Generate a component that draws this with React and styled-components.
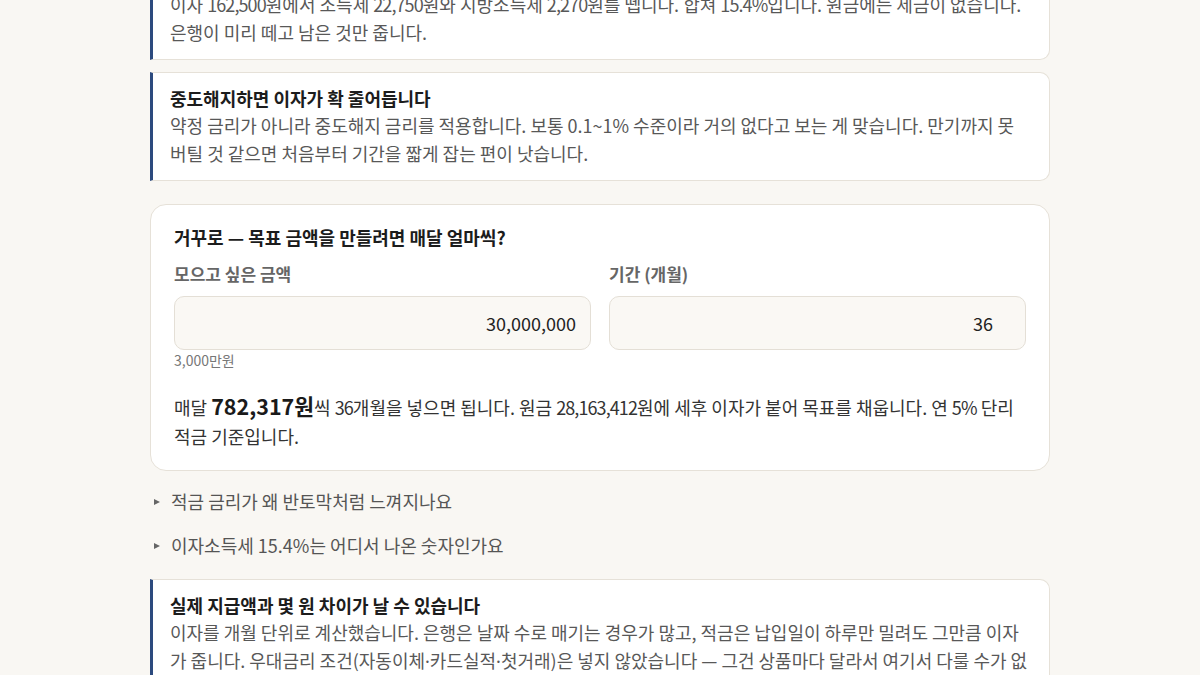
import React from 'react';
import styled, { createGlobalStyle } from 'styled-components';

const GlobalStyle = createGlobalStyle`
	html, body {
		margin: 0;
		padding: 0;
		background: #f9f7f3;
		font-family: "Noto Sans CJK KR", "Noto Sans", sans-serif;
		font-size: 18px;
		color: #333;
	}
`;

const Column = styled.main`
	width: 900px;
	margin: -49px auto 0;
	display: flex;
	flex-direction: column;
`;

const Callout = styled.section`
	background: #fff;
	border: 1px solid #e6e1d8;
	border-left: 3px solid #2c4a7e;
	border-radius: 0 10px 10px 0;
	padding: 12px 20px 13px 17px;
	margin-bottom: 12px;
`;

const CalloutTitle = styled.h3`
	margin: 0;
	font-size: 18px;
	line-height: 26px;
	font-weight: 700;
	color: #1c1c1c;
`;

const CalloutText = styled.p`
	margin: 0;
	font-size: 18px;
	line-height: 28px;
	color: #585858;
`;

// figures sit a little tighter than the hangul around them
const Num = styled.span`
	letter-spacing: -0.05em;
`;

const Sep = styled.span`
	font-family: "Noto Sans", sans-serif;
`;

const Card = styled.section`
	background: #fff;
	border: 1px solid #e6e1d8;
	border-radius: 16px;
	padding: 20px 23px 19px;
	margin-top: 11px;
	margin-bottom: 8px;
`;

const CardTitle = styled.h3`
	margin: 0 0 12px;
	font-size: 18px;
	line-height: 25px;
	font-weight: 700;
	color: #1c1c1c;
`;

const Fields = styled.div`
	display: grid;
	grid-template-columns: 1fr 1fr;
	gap: 18px;
	align-items: start;
`;

const Field = styled.label`
	display: flex;
	flex-direction: column;
`;

const Label = styled.span`
	font-size: 17px;
	line-height: 24px;
	font-weight: 600;
	color: #666;
	margin-bottom: 10px;
`;

const Input = styled.input`
	box-sizing: border-box;
	height: 54px;
	width: 100%;
	border: 1px solid #e4dfd6;
	border-radius: 10px;
	background: #faf8f4;
	padding: 0 ${(p) => p.$padRight || 14}px 0 14px;
	text-align: right;
	font-family: inherit;
	font-size: 18px;
	color: #222;
	outline: none;
`;

const Hint = styled.span`
	font-size: 14px;
	line-height: 20px;
	color: #777;
`;

const Result = styled.p`
	margin: 21px 0 0;
	font-size: 18px;
	line-height: 29px;
	color: #333;
`;

const Big = styled.strong`
	font-size: 21.5px;
	font-weight: 700;
	color: #1a1a1a;
`;

const Faq = styled.details`
	font-size: 18px;
	color: #555;
	margin-bottom: ${(p) => p.$gap || 0}px;
`;

const Question = styled.summary`
	display: flex;
	align-items: center;
	padding: 8px 0;
	line-height: 28px;
	list-style: none;
	cursor: pointer;
	&::-webkit-details-marker {
		display: none;
	}
	&::before {
		content: '';
		width: 0;
		height: 0;
		margin: 1px 11px 0 4px;
		border-left: 6px solid #666;
		border-top: 3.5px solid transparent;
		border-bottom: 3.5px solid transparent;
	}
`;

export default function App() {
	return (
		<>
			<GlobalStyle />
			<Column>
				<Callout>
					<CalloutTitle>세금은 이자에만 붙습니다</CalloutTitle>
					<CalloutText>
						이자 <Num>162,500</Num>원에서 소득세 <Num>22,750</Num>원와 지방소득세 <Num>2,270</Num>원를 뗍니다. 합쳐 <Num>15.4%</Num>입니다. 원금에는 세금이 없습니다. 은행이 미리 떼고 남은 것만 줍니다.
					</CalloutText>
				</Callout>
				<Callout>
					<CalloutTitle>중도해지하면 이자가 확 줄어듭니다</CalloutTitle>
					<CalloutText>
						약정 금리가 아니라 중도해지 금리를 적용합니다. 보통 0.1~1% 수준이라 거의 없다고 보는 게 맞습니다. 만기까지 못 버틸 것 같으면 처음부터 기간을 짧게 잡는 편이 낫습니다.
					</CalloutText>
				</Callout>

				<Card>
					<CardTitle>거꾸로 — 목표 금액을 만들려면 매달 얼마씩?</CardTitle>
					<Fields>
						<Field>
							<Label>모으고 싶은 금액</Label>
							<Input defaultValue="30,000,000" inputMode="numeric" />
							<Hint>3,000만원</Hint>
						</Field>
						<Field>
							<Label>기간 (개월)</Label>
							<Input defaultValue="36" inputMode="numeric" $padRight={32} />
						</Field>
					</Fields>
					<Result>
						매달 <Big>782,317원</Big>씩 <Num>36</Num>개월을 넣으면 됩니다. 원금 <Num>28,163,412</Num>원에 세후 이자가 붙어 목표를 채웁니다. 연 <Num>5%</Num> 단리 적금 기준입니다.
					</Result>
				</Card>

				<Faq>
					<Question>적금 금리가 왜 반토막처럼 느껴지나요</Question>
				</Faq>
				<Faq $gap={12}>
					<Question>이자소득세 15.4%는 어디서 나온 숫자인가요</Question>
				</Faq>

				<Callout>
					<CalloutTitle>실제 지급액과 몇 원 차이가 날 수 있습니다</CalloutTitle>
					<CalloutText>
						이자를 개월 단위로 계산했습니다. 은행은 날짜 수로 매기는 경우가 많고, 적금은 납입일이 하루만 밀려도 그만큼 이자가 줍니다. 우대금리 조건(자동이체<Sep>·</Sep>카드실적<Sep>·</Sep>첫거래)은 넣지 않았습니다 — 그건 상품마다 달라서 여기서 다룰 수가 없습니다.
					</CalloutText>
				</Callout>
			</Column>
		</>
	);
}
